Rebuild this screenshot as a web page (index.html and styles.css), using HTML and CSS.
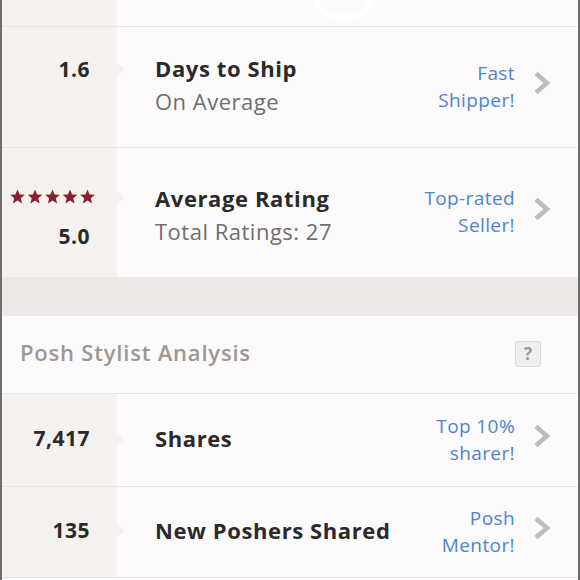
FILE: index.html
```html
<!DOCTYPE html>
<html lang="en">
<head>
    <meta charset="UTF-8">
    <meta name="viewport" content="width=device-width, initial-scale=1.0">
    <title>Seller Stats</title>
    <link rel="stylesheet" href="styles.css">
</head>
<body>

    <div class="page">
        <!-- Top of the previous card (partly scrolled away) -->
        <div class="top-strip">
            <div class="strip-side"></div>
            <svg class="strip-logo" width="80" height="26" viewBox="0 0 80 26">
                <path d="M10 -2 C 14 14, 30 20, 48 17 C 58 15, 64 8, 66 -2" fill="none" stroke="#ffffff" stroke-width="6" stroke-linecap="round"/>
            </svg>
        </div>

        <!-- Shipping -->
        <div class="stat-row row-tall">
            <div class="stat-value">
                <div class="value-line notch">1.6</div>
                <div class="value-line"></div>
            </div>
            <div class="stat-text">
                <div class="stat-title">Days to Ship</div>
                <div class="stat-sub">On Average</div>
            </div>
            <div class="stat-badge">Fast<br>Shipper!</div>
            <svg class="chevron" width="18" height="24" viewBox="0 0 18 24">
                <polyline points="3,2.5 14,12 3,21.5" fill="none" stroke="#bdbcbb" stroke-width="4.5"/>
            </svg>
        </div>

        <!-- Rating -->
        <div class="stat-row row-rating">
            <div class="stat-value">
                <div class="value-line notch stars">
                    <svg width="86" height="16" viewBox="0 0 86 16">
                        <g fill="#8a1f2f">
                            <path id="star" d="M7.5 0.5 L9.6 5.4 L14.8 5.8 L10.8 9.2 L12.1 14.4 L7.5 11.6 L2.9 14.4 L4.2 9.2 L0.2 5.8 L5.4 5.4 Z"/>
                            <use href="#star" x="17.5"/>
                            <use href="#star" x="35"/>
                            <use href="#star" x="52.5"/>
                            <use href="#star" x="70"/>
                        </g>
                    </svg>
                </div>
                <div class="value-line rating-num">5.0</div>
            </div>
            <div class="stat-text">
                <div class="stat-title">Average Rating</div>
                <div class="stat-sub">Total Ratings: 27</div>
            </div>
            <div class="stat-badge">Top-rated<br>Seller!</div>
            <svg class="chevron" width="18" height="24" viewBox="0 0 18 24">
                <polyline points="3,2.5 14,12 3,21.5" fill="none" stroke="#bdbcbb" stroke-width="4.5"/>
            </svg>
        </div>

        <div class="gap-band"></div>

        <!-- Posh Stylist Analysis -->
        <div class="section-head">
            <h2>Posh Stylist Analysis</h2>
            <span class="help-box">?</span>
        </div>

        <div class="stat-row row-short">
            <div class="stat-value">
                <div class="value-line notch">7,417</div>
            </div>
            <div class="stat-text">
                <div class="stat-title">Shares</div>
            </div>
            <div class="stat-badge">Top 10%<br>sharer!</div>
            <svg class="chevron" width="18" height="24" viewBox="0 0 18 24">
                <polyline points="3,2.5 14,12 3,21.5" fill="none" stroke="#bdbcbb" stroke-width="4.5"/>
            </svg>
        </div>

        <div class="stat-row row-short last">
            <div class="stat-value">
                <div class="value-line notch">135</div>
            </div>
            <div class="stat-text">
                <div class="stat-title">New Poshers Shared</div>
            </div>
            <div class="stat-badge">Posh<br>Mentor!</div>
            <svg class="chevron" width="18" height="24" viewBox="0 0 18 24">
                <polyline points="3,2.5 14,12 3,21.5" fill="none" stroke="#bdbcbb" stroke-width="4.5"/>
            </svg>
        </div>
    </div>

</body>
</html>
```

FILE: styles.css
```css
/* General Styles */
body {
    margin: 0;
    padding: 0;
    font-family: 'Open Sans', 'Noto Sans', sans-serif;
    background-color: #fcfafa;
    color: #2a2a2a;
}

.page {
    border-left: 2px solid #6e6c6a;
    border-right: 2px solid #6e6c6a;
    min-height: 580px;
    box-sizing: border-box;
    background-color: #fcfafa;
}

/* Strip left over from the card above */
.top-strip {
    height: 26px;
    display: flex;
    border-bottom: 1px solid #e6e3e1;
    overflow: hidden;
}

.strip-side {
    width: 115px;
    background-color: #f4f1ee;
}

.strip-logo {
    margin-left: 188px;
}

/* Stat rows */
.stat-row {
    display: flex;
    align-items: stretch;
    border-bottom: 1px solid #e6e3e1;
}

.row-tall {
    height: 120px;
}

.row-rating {
    height: 129px;
    border-bottom: none;
}

.row-short {
    height: 92px;
}

.row-short.last {
    height: 90px;
}

.stat-value {
    width: 115px;
    flex-shrink: 0;
    box-sizing: border-box;
    padding-right: 27px;
    padding-bottom: 3px;
    background-color: #f4f1ee;
    display: flex;
    flex-direction: column;
    justify-content: center;
    align-items: flex-end;
    font-size: 21px;
    font-weight: 700;
    letter-spacing: 0.5px;
    color: #2a2a2a;
}

.value-line {
    height: 33px;
    line-height: 33px;
    position: relative;
}

/* little arrow pointing from the value column to the title */
.notch::after {
    content: "";
    position: absolute;
    top: 50%;
    right: -34px;
    margin-top: -7px;
    border-top: 7px solid transparent;
    border-bottom: 7px solid transparent;
    border-left: 7px solid #f4f1ee;
}

.row-rating .stat-value {
    padding-bottom: 0;
}

.stars {
    display: flex;
    align-items: center;
    margin-right: -6px;
    margin-top: 8px;
}

.stars svg {
    display: block;
}

.stars.notch::after {
    right: -28px;
    margin-top: -6px;
}

.rating-num {
    margin-top: 6px;
}

.stat-text {
    flex: 1;
    padding-left: 38px;
    padding-bottom: 4px;
    display: flex;
    flex-direction: column;
    justify-content: center;
}

.row-rating .stat-text {
    padding-bottom: 0;
    padding-top: 4px;
}

.stat-title {
    font-size: 22px;
    font-weight: 700;
    line-height: 33px;
    letter-spacing: 0.6px;
    color: #2a2a2a;
}

.stat-sub {
    font-size: 22px;
    line-height: 33px;
    letter-spacing: 0.5px;
    color: #6e6e6e;
}

.stat-badge {
    align-self: center;
    text-align: right;
    font-size: 19px;
    line-height: 27px;
    letter-spacing: 0.4px;
    color: #4b84d2;
    margin-top: -1px;
}

.chevron {
    align-self: center;
    margin: -8px 27px 0 18px;
}

/* Grey band between sections */
.gap-band {
    height: 39px;
    background-color: #ebe8e5;
}

/* Section header */
.section-head {
    height: 78px;
    box-sizing: border-box;
    display: flex;
    align-items: center;
    justify-content: space-between;
    padding: 0 37px 6px 18px;
    background-color: #fcfafa;
    border-bottom: 1px solid #e6e3e1;
}

.section-head h2 {
    margin: 0;
    font-size: 22px;
    font-weight: 600;
    letter-spacing: 0.8px;
    color: #9b9896;
}

.help-box {
    width: 26px;
    height: 26px;
    margin-top: 4px;
    box-sizing: border-box;
    border: 1px solid #dcdad8;
    border-radius: 3px;
    background-color: #f0eeed;
    color: #9b9896;
    font-size: 17px;
    font-weight: 700;
    text-align: center;
    line-height: 24px;
}
```
